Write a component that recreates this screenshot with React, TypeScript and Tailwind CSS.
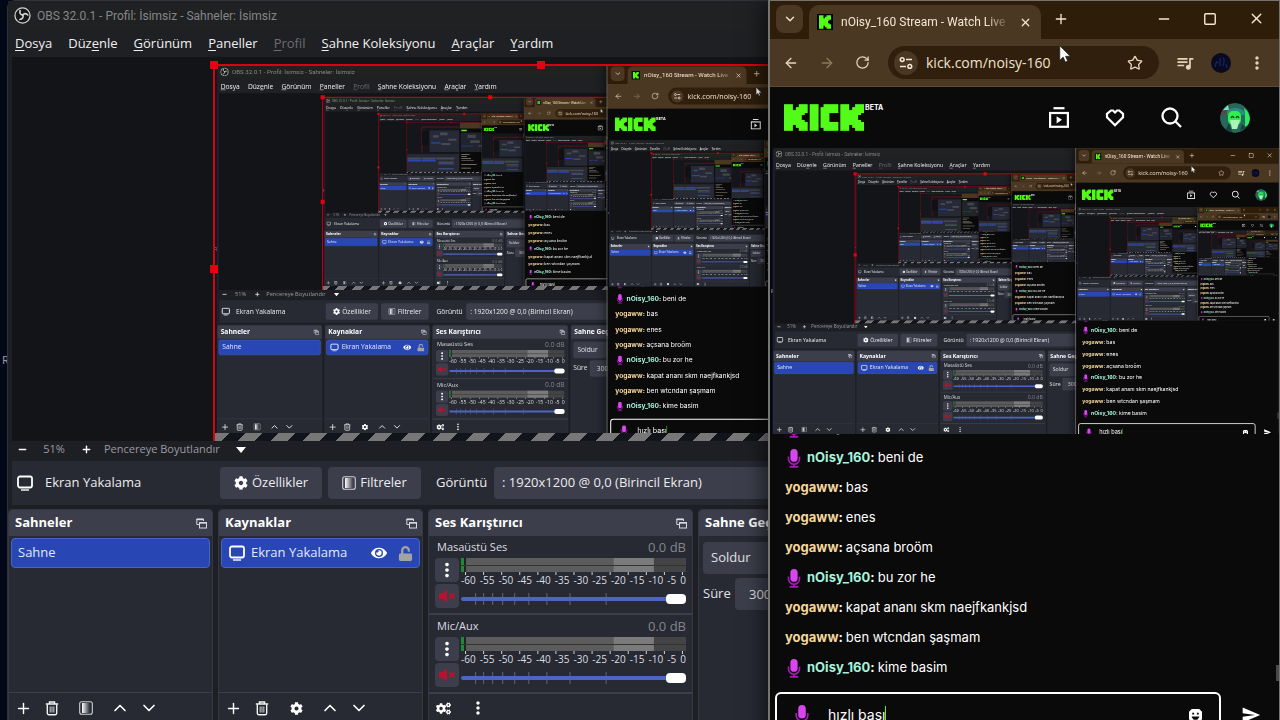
import { useId, useLayoutEffect, useRef, useState } from "react";
import type { ReactNode } from "react";
import {
  ArrowLeft,
  ArrowRight,
  ChevronDown,
  ChevronUp,
  Minus,
  Plus,
  RotateCw,
  Square,
  Star,
  X,
} from "lucide-react";
import { FaCog, FaCogs, FaEye, FaUnlock, FaVolumeMute } from "react-icons/fa";
import { MdMoreVert, MdQueueMusic, MdSend } from "react-icons/md";

const SCREEN_WIDTH = 1280;
const MAX_DEPTH = 3;

const menus = [
  { key: "D", before: "", after: "osya" },
  { key: "e", before: "Düz", after: "nle" },
  { key: "G", before: "", after: "örünüm" },
  { key: "P", before: "", after: "aneller" },
  { key: "P", before: "", after: "rofil", disabled: true },
  { key: "S", before: "", after: "ahne Koleksiyonu" },
  { key: "A", before: "", after: "raçlar" },
  { key: "Y", before: "", after: "ardım" },
];

const messages = [
  { user: "nOisy_160", text: "selam", mod: true },
  { user: "nOisy_160", text: "beni de", mod: true },
  { user: "yogaww", text: "bas" },
  { user: "yogaww", text: "enes" },
  { user: "yogaww", text: "açsana broöm" },
  { user: "nOisy_160", text: "bu zor he", mod: true },
  { user: "yogaww", text: "kapat ananı skm naejfkankjsd" },
  { user: "yogaww", text: "ben wtcndan şaşmam" },
  { user: "nOisy_160", text: "kime basim", mod: true },
];

const levels = [-60, -55, -50, -45, -40, -35, -30, -25, -20, -15, -10, -5, 0];
const faderMarks = [14, 22, 31, 41, 53, 67, 85, 108, 144];

/* ---------- icons ---------- */

const ObsLogo = () => (
  <svg viewBox="0 0 18 18" className="size-[17px]" fill="none">
    <circle cx="9" cy="9" r="8" fill="#17181c" stroke="#d6d6d6" strokeWidth="1.3" />
    <g stroke="#d6d6d6" strokeWidth="1.7" strokeLinecap="round">
      <path d="M9.3 8.6C6.8 8.4 5.7 6.3 6.4 3.8" />
      <path d="M9.3 8.6C10.6 6.5 13 6.5 14.6 8.4" />
      <path d="M9.3 8.6C10.3 11 8.8 13 6.2 13.2" />
    </g>
  </svg>
);

const MonitorIcon = () => (
  <svg viewBox="0 0 18 16" className="h-4 w-[18px] shrink-0" fill="none">
    <rect x="2" y="1.5" width="14" height="11" rx="2" stroke="#fff" strokeWidth="1.8" />
    <path d="M5 15h8" stroke="#fff" strokeWidth="1.4" />
  </svg>
);

const FloatIcon = () => (
  <svg viewBox="0 0 11 11" className="size-[11px]" fill="none" stroke="#d8d9de">
    <path d="M3 6.5H.8V1h6.7v2" />
    <path d="M.5 1.5h7" strokeWidth="1.4" />
    <rect x="3.5" y="4.5" width="7" height="5.5" />
    <path d="M3.5 5h7" strokeWidth="1.4" />
  </svg>
);

const FilterIcon = () => {
  const id = useId();
  return (
    <svg viewBox="0 0 14 14" className="size-[14px]" fill="none">
      <linearGradient id={id}>
        <stop offset="0" stopColor="#fff" />
        <stop offset="1" stopColor="#fff" stopOpacity="0" />
      </linearGradient>
      <rect x=".7" y=".7" width="12.6" height="12.6" rx="2" stroke="#cfd0d6" strokeWidth="1.1" />
      <rect x="3" y="2" width="8" height="10" fill={`url(#${id})`} />
    </svg>
  );
};

const TrashIcon = () => (
  <svg viewBox="0 0 14 15" className="h-[15px] w-[14px]" fill="none" stroke="#f2f2f4">
    <path d="M.8 3h12.4M4.5 2.5V1h5v1.5" strokeWidth="1.5" />
    <path d="M2.3 3.5v8.8c0 .8.6 1.4 1.4 1.4h6.6c.8 0 1.4-.6 1.4-1.4V3.5" strokeWidth="1.4" />
    <path d="M5.2 5.5v6M7 5.5v6M8.8 5.5v6" stroke="#b5b6bc" strokeWidth="1.2" />
  </svg>
);

const MicIcon = ({ className }: { className: string }) => (
  <svg viewBox="0 0 14 20" className={className} fill="none">
    <rect x="3.2" y="0" width="7.6" height="13.5" rx="3.8" fill="#d946ef" />
    <path d="M1.2 8v2.2a5.8 5.8 0 0 0 11.6 0V8" stroke="#a21caf" strokeWidth="1.7" />
    <path d="M7 16v2.6M2.5 18.8h9" stroke="#a21caf" strokeWidth="1.8" />
  </svg>
);

const KickBlockK = ({ x = 0 }: { x?: number }) => (
  <g transform={`translate(${x} 0)`}>
    <rect width="9" height="27" />
    <rect x="8" y="6" width="5" height="15" />
    <rect x="12" y="3" width="6" height="21" />
    <rect x="15" width="9" height="9" />
    <rect x="17" y="8" width="4" height="3" />
    <rect x="17" y="16" width="4" height="3" />
    <rect x="15" y="18" width="9" height="9" />
  </g>
);

const KickLogo = () => (
  <svg viewBox="0 0 81 27" className="h-[27px] w-20" fill="#53fc18" role="img" aria-label="Kick">
    <KickBlockK />
    <rect x="26" width="9" height="27" />
    <rect x="37" y="3" width="9" height="21" />
    <rect x="40" width="15" height="9" />
    <rect x="40" y="18" width="15" height="9" />
    <KickBlockK x={57} />
  </svg>
);

const Pointer = () => (
  <svg viewBox="0 0 12 18" className="absolute top-[45px] left-[82.7%] z-30 h-[18px] w-3">
    <path d="M.8.8v14.4l3.4-3.1 2.2 5 2.3-1-2.2-4.8h4.7z" fill="#fff" stroke="#222" strokeWidth=".7" />
  </svg>
);

/* ---------- screen capture ---------- */

// Far too small to read, so only the coloured blocks are drawn
const Thumbnail = () => (
  <svg viewBox="0 0 128 72" className="size-full">
    <rect width="128" height="72" fill="#15161b" />
    <path d="M22 44V7h86" fill="none" stroke="#8c1018" />
    <path d="M22 13h10v20H22z" fill="#101116" />
    <path d="M33 12h43v31H33z" fill="#272a36" />
    <path d="M38 19h8v3h-8zM48 15h11v4H48zM60 24h12v3H60zM50 30h13v3H50z" fill="#474a59" />
    <path d="M35 29h14v2H35z" fill="#2847b5" />
    <path d="M0 46h76v26H0z" fill="#272a33" />
    <path d="M1 51h20v3H1zM22 51h20v3H22zM43 51h26v3H43zM46 57h22v2H46z" fill="#474a56" />
    <path d="M1 54h20v3H1zM22 54h20v3H22z" fill="#2847b5" />
    <path d="M46 60h22v1H46zM46 67h22v1H46z" fill="#4c65c2" />
    <path d="M77 0h51v72H77z" fill="#0a0a0b" />
    <path d="M77 0h51v9H77z" fill="#4a3823" />
    <path d="M79 11h8v2h-8z" fill="#53fc18" />
    <path d="M78 15h50v28H78z" fill="#22242d" />
    <path d="M88 18h12v5H88zM92 26h14v4H92zM108 21h16v4h-16zM104 33h18v3h-18z" fill="#42454f" />
    <path d="M79 34h8v1h-8zM88 34h8v1h-8z" fill="#2847b5" />
    <path d="M79 46h12v1H79zM79 49h8v1h-8zM79 52h14v1H79zM79 55h18v1H79zM79 61h22v1H79zM79 66h14v1H79z" fill="#8f8a78" />
  </svg>
);

const Capture = ({ depth }: { depth: number }) => {
  const ref = useRef<HTMLDivElement>(null);
  const [scale, setScale] = useState(0.5);

  useLayoutEffect(() => {
    const el = ref.current;
    if (!el) return;
    const update = () => setScale(el.offsetWidth / SCREEN_WIDTH);
    update();
    const observer = new ResizeObserver(update);
    observer.observe(el);
    return () => observer.disconnect();
  }, []);

  return (
    <div ref={ref} className="aspect-video w-full shrink-0 overflow-hidden bg-[#1a1c23]" inert>
      {depth < MAX_DEPTH ? (
        <div className="w-[1280px] origin-top-left" style={{ transform: `scale(${scale})` }}>
          <Desktop depth={depth + 1} />
        </div>
      ) : (
        <Thumbnail />
      )}
    </div>
  );
};

/* ---------- OBS ---------- */

const Dock = ({
  title,
  className,
  toolbar,
  children,
}: {
  title: string;
  className: string;
  toolbar?: ReactNode;
  children: ReactNode;
}) => (
  <section className={`flex flex-col rounded-t border border-[#343744] bg-[#272a33] ${className}`}>
    <header className="flex h-[26px] shrink-0 items-center justify-between rounded-t bg-[#3c3e4b] pr-1 pl-[6px]">
      <h2 className="text-[13px] font-bold whitespace-nowrap text-white">{title}</h2>
      <button aria-label="Ayır" className="p-px">
        <FloatIcon />
      </button>
    </header>
    <div className="min-h-0 flex-1">{children}</div>
    {toolbar && (
      <div className="flex h-[31px] shrink-0 items-center gap-[9px] border-t border-[#3c3e4b] px-1 text-white">
        {toolbar}
      </div>
    )}
  </section>
);

const ToolButton = ({ label, children }: { label: string; children: ReactNode }) => (
  <button aria-label={label} className="flex size-5 items-center justify-center">
    {children}
  </button>
);

const Channel = ({ name }: { name: string }) => {
  const id = useId();
  return (
    <div className="h-[79px] border-b-2 border-[#3c3e4b] px-[6px] pt-px">
      <div className="flex h-[21px] items-center justify-between pl-[2px] text-[#dcdde1]">
        <label htmlFor={id} className="text-[11px]">
          {name}
        </label>
        <span className="text-[13px] text-[#84868e]">0.0 dB</span>
      </div>
      <div className="flex gap-[2px]">
        <div className="flex w-6 shrink-0 flex-col gap-[2px]">
          <button
            aria-label={`${name} seçenekleri`}
            className="flex h-6 items-center justify-center rounded bg-[#3c3e4b] text-white"
          >
            <MdMoreVert size={22} />
          </button>
          <button
            aria-label={`${name} sesini aç`}
            className="flex h-6 items-center justify-center rounded bg-[#3c3e4b] text-[#b8122f]"
          >
            <FaVolumeMute size={16} />
          </button>
        </div>
        <div className="min-w-0 flex-1">
          <svg viewBox="0 0 224 17" preserveAspectRatio="none" className="h-[17px] w-full">
            <rect width="224" height="14" fill="#444446" />
            <rect width="192" height="14" fill="#5c5c5d" />
            <rect x="152" width="40" height="14" fill="#7b7b7b" />
            <rect width="3" height="14" fill="#1f8a35" />
            <rect x="3" width="2" height="14" fill="#222" />
            <rect y="7" width="224" height="1" fill="#333336" />
            {levels.map((level, i) => (
              <rect key={level} x={4 + i * 18} y="14" width="1" height="3" fill="#d0d0d0" />
            ))}
          </svg>
          <div className="flex h-[10px] items-center justify-between text-[10px] leading-[10px] text-[#dcdde1]">
            {levels.map((level) => (
              <span key={level}>{level}</span>
            ))}
          </div>
          <div className="relative flex h-7 items-center">
            <svg viewBox="0 0 224 12" preserveAspectRatio="none" className="absolute h-3 w-full">
              {faderMarks.map((x) => (
                <rect key={x} x={x} width="1" height="12" fill="#62646e" />
              ))}
            </svg>
            <input
              id={id}
              type="range"
              defaultValue={100}
              className="relative h-1 w-full appearance-none rounded-full bg-[#4c65c2] [&::-webkit-slider-thumb]:h-[10px] [&::-webkit-slider-thumb]:w-5 [&::-webkit-slider-thumb]:appearance-none [&::-webkit-slider-thumb]:rounded [&::-webkit-slider-thumb]:bg-white"
            />
          </div>
        </div>
      </div>
    </div>
  );
};

const ObsWindow = ({ depth }: { depth: number }) => {
  const id = useId();
  return (
    <div className="absolute top-0 right-[16%] bottom-12 left-[7px] flex flex-col rounded-tl-lg border border-[#30343a] bg-[#1e1f24] font-['Open_Sans','Noto_Sans',sans-serif]">
      <div className="flex h-[29px] shrink-0 items-center gap-[6px] bg-[#202122] pl-[6px]">
        <ObsLogo />
        <h1 className="font-[Roboto,sans-serif] text-xs text-[#85868a]">
          OBS 32.0.1 - Profil: İsimsiz - Sahneler: İsimsiz
        </h1>
      </div>
      <nav className="flex h-[27px] shrink-0 items-center gap-4 bg-[#1f2023] pl-[7px] text-[13px] text-[#f0f0f2]">
        {menus.map((menu) => (
          <button
            key={menu.key + menu.after}
            disabled={menu.disabled}
            className="whitespace-nowrap disabled:text-[#6c6d71]"
          >
            {menu.before}
            <span className="underline underline-offset-2">{menu.key}</span>
            {menu.after}
          </button>
        ))}
      </nav>

      {/* Preview */}
      <div className="mx-1 flex min-h-0 flex-1 justify-center overflow-hidden bg-[#131418] pt-[7px]">
        <div className="relative flex aspect-[8/5] w-[62%] shrink-0 flex-col self-start">
          <Capture depth={depth} />
          <div className="flex-1 bg-[repeating-linear-gradient(135deg,#777777_0px,#777777_12px,#12141c_12px,#12141c_23px)]" />
          <div className="absolute inset-0 border-2 border-[#d90010]">
            <span className="absolute -top-[5px] -left-[5px] size-2 bg-[#e60010]" />
            <span className="absolute -top-[5px] left-1/2 size-2 -translate-x-1/2 bg-[#e60010]" />
            <span className="absolute top-1/2 -left-[5px] size-2 -translate-y-1/2 bg-[#e60010]" />
          </div>
        </div>
      </div>
      <div className="mx-1 flex h-5 shrink-0 items-center pb-[3px] text-[11px] text-[#9a9ba0]">
        <button aria-label="Uzaklaştır" className="flex w-5 justify-center text-white">
          <Minus size={11} strokeWidth={3} />
        </button>
        <span className="w-11 text-center">51%</span>
        <button aria-label="Yakınlaştır" className="flex w-5 justify-center text-white">
          <Plus size={11} strokeWidth={3} />
        </button>
        <button className="flex items-center gap-4 pl-2">
          Pencereye Boyutlandır
          <svg viewBox="0 0 10 6" className="h-[6px] w-[10px]" fill="#fff">
            <path d="M0 0h10L5 6z" />
          </svg>
        </button>
      </div>

      {/* Context bar */}
      <div className="mx-1 mb-1 flex h-11 shrink-0 items-center bg-[#272a33] px-1 text-[13px] text-[#ececef]">
        <div className="flex w-[204px] shrink-0 items-center gap-[11px]">
          <MonitorIcon />
          Ekran Yakalama
        </div>
        <button className="flex h-8 w-[102px] shrink-0 items-center justify-center gap-1 rounded bg-[#3c3e4b]">
          <FaCog size={14} color="#fff" />
          Özellikler
        </button>
        <button className="ml-[6px] flex h-8 w-[93px] shrink-0 items-center justify-center gap-1 rounded bg-[#3c3e4b]">
          <FilterIcon />
          Filtreler
        </button>
        <label htmlFor={`${id}-display`} className="ml-[15px] w-[58px] shrink-0">
          Görüntü
        </label>
        <select
          id={`${id}-display`}
          className="h-8 min-w-0 flex-1 appearance-none rounded bg-[#3c3e4b] px-2"
        >
          <option>: 1920x1200 @ 0,0 (Birincil Ekran)</option>
        </select>
      </div>

      {/* Docks */}
      <div className="mb-[27px] flex h-[215px] shrink-0 gap-[5px]">
        <Dock
          title="Sahneler"
          className="w-[205px]"
          toolbar={
            <>
              <ToolButton label="Sahne ekle"><Plus size={17} /></ToolButton>
              <ToolButton label="Sahneyi sil"><TrashIcon /></ToolButton>
              <div className="mx-[5px] flex">
                <ToolButton label="Sahne filtreleri"><FilterIcon /></ToolButton>
              </div>
              <ToolButton label="Yukarı taşı"><ChevronUp size={20} /></ToolButton>
              <ToolButton label="Aşağı taşı"><ChevronDown size={20} /></ToolButton>
            </>
          }
        >
          <ul className="p-[2px]">
            <li className="flex h-[30px] items-center rounded border border-[#4563c9] bg-[#2847b5] px-[6px] text-[13px] text-[#e4e8f8]">
              Sahne
            </li>
          </ul>
        </Dock>
        <Dock
          title="Kaynaklar"
          className="w-[205px]"
          toolbar={
            <>
              <ToolButton label="Kaynak ekle"><Plus size={17} /></ToolButton>
              <ToolButton label="Kaynağı sil"><TrashIcon /></ToolButton>
              <div className="mx-[5px] flex">
                <ToolButton label="Kaynak ayarları"><FaCog size={13} /></ToolButton>
              </div>
              <ToolButton label="Yukarı taşı"><ChevronUp size={20} /></ToolButton>
              <ToolButton label="Aşağı taşı"><ChevronDown size={20} /></ToolButton>
            </>
          }
        >
          <ul className="p-[2px]">
            <li className="flex h-[30px] items-center gap-[5px] rounded border border-[#4563c9] bg-[#2847b5] px-[6px] text-[13px] text-[#e4e8f8]">
              <MonitorIcon />
              <span className="flex-1 whitespace-nowrap">Ekran Yakalama</span>
              <button aria-label="Gizle" className="mr-[6px]">
                <FaEye size={16} color="#fff" />
              </button>
              <button aria-label="Kilitle">
                <FaUnlock size={15} color="#a3a3a3" />
              </button>
            </li>
          </ul>
        </Dock>
        <Dock
          title="Ses Karıştırıcı"
          className="w-[265px]"
          toolbar={
            <>
              <ToolButton label="Gelişmiş ses özellikleri"><FaCogs size={15} /></ToolButton>
              <div className="ml-[6px]">
                <ToolButton label="Mikser menüsü"><MdMoreVert size={20} /></ToolButton>
              </div>
            </>
          }
        >
          <Channel name="Masaüstü Ses" />
          <Channel name="Mic/Aux" />
        </Dock>
        <Dock title="Sahne Geçişleri" className="flex-1">
          <div className="flex flex-col gap-1 px-1 py-[6px] text-[13px] text-[#e0e1e5]">
            <select aria-label="Geçiş" className="h-8 appearance-none rounded bg-[#3c3e4b] px-2">
              <option>Soldur</option>
            </select>
            <div className="flex items-center">
              <label htmlFor={`${id}-duration`} className="w-8 shrink-0">
                Süre
              </label>
              <input
                id={`${id}-duration`}
                defaultValue="300 ms"
                className="h-8 min-w-0 flex-1 rounded bg-[#3c3e4b] px-[14px]"
              />
            </div>
          </div>
        </Dock>
      </div>
    </div>
  );
};

/* ---------- browser ---------- */

const ChromeBars = () => (
  <>
    <div className="flex h-[38px] shrink-0 items-end bg-[#2d1d09] pl-[6px] text-[#f3e6d3]">
      <button
        aria-label="Sekmelerde ara"
        className="mb-[6px] flex h-7 w-[27px] items-center justify-center rounded-lg bg-[#4a3823]"
      >
        <ChevronDown size={14} strokeWidth={2.4} />
      </button>
      <div className="ml-[6px] flex h-[34px] w-[232px] items-center rounded-t-[10px] bg-[#4a3823] pr-[9px] pl-2">
        <span className="mr-2 flex size-4 shrink-0 items-center justify-center bg-black">
          <svg viewBox="0 0 24 27" className="h-[14px] w-3" fill="#53fc18">
            <KickBlockK />
          </svg>
        </span>
        <span className="min-w-0 flex-1 overflow-hidden font-[Roboto,sans-serif] text-xs whitespace-nowrap [mask-image:linear-gradient(to_right,black_85%,transparent)]">
          nOisy_160 Stream - Watch Live
        </span>
        <button aria-label="Sekmeyi kapat" className="ml-2">
          <X size={13} strokeWidth={2.4} />
        </button>
      </div>
      <button aria-label="Yeni sekme" className="mb-3 ml-3">
        <Plus size={16} />
      </button>
      <div className="mb-3 ml-auto flex items-center gap-[31px] pr-[14px]">
        <button aria-label="Simge durumuna küçült"><Minus size={16} /></button>
        <button aria-label="Ekranı kapla"><Square size={14} strokeWidth={2.4} /></button>
        <button aria-label="Kapat"><X size={17} /></button>
      </div>
    </div>
    <div className="flex h-12 shrink-0 items-center border-b border-[#5d4a35] bg-[#4a3823] pr-3 pl-[13px] text-[#e6d3ba]">
      <button aria-label="Geri" className="mr-5"><ArrowLeft size={16} /></button>
      <button aria-label="İleri" className="mr-5 text-[#8d7759]"><ArrowRight size={16} /></button>
      <button aria-label="Yenile" className="mr-[18px]"><RotateCw size={15} /></button>
      <div className="flex h-[33px] min-w-0 flex-1 items-center rounded-full bg-[#2f1f0c] pr-4 pl-[6px]">
        <span className="mr-2 flex size-6 shrink-0 items-center justify-center rounded-full bg-[#4a3823]">
          <svg viewBox="0 0 14 14" className="size-[14px]" fill="none" stroke="#f3e6d3" strokeWidth="1.5">
            <circle cx="3.2" cy="3.6" r="1.9" />
            <path d="M7 3.6h6M1 10.4h6" />
            <circle cx="10.8" cy="10.4" r="1.9" />
          </svg>
        </span>
        <input
          aria-label="Adres çubuğu"
          defaultValue="kick.com/noisy-160"
          className="min-w-0 flex-1 bg-transparent text-sm text-[#f1e3cf] outline-none"
        />
        <button aria-label="Yer işareti ekle"><Star size={16} /></button>
      </div>
      <button aria-label="Medya" className="ml-4"><MdQueueMusic size={20} /></button>
      <button aria-label="Profil" className="mx-4">
        <svg viewBox="0 0 20 20" className="size-5">
          <circle cx="10" cy="10" r="10" fill="#080b20" />
          <path d="M4 14c1-5 2-7 3-4M9 5v8M12 5c2 1 1 5 0 8M15 11l1 4" fill="none" stroke="#16266b" strokeWidth="1.2" />
        </svg>
      </button>
      <button aria-label="Menü"><MdMoreVert size={20} /></button>
    </div>
  </>
);

const KickPage = ({ depth }: { depth: number }) => (
  <div className="relative flex min-h-0 flex-1 flex-col bg-[#0a0a0b] font-['Inter',sans-serif] text-white">
    <header className="flex h-[61px] shrink-0 items-center pr-[29px] pl-[14px]">
      <a href="#" className="flex items-start gap-px">
        <KickLogo />
        <span className="text-[7px] leading-[7px] font-bold">BETA</span>
      </a>
      <nav className="ml-auto flex items-center gap-9">
        <a href="#" aria-label="Takip edilenler">
          <svg viewBox="0 0 20 21" className="h-[21px] w-5" fill="none">
            <path d="M4.5 1.2h11" stroke="#fff" strokeWidth="2.2" />
            <rect x="1.1" y="6" width="17.8" height="13.8" stroke="#fff" strokeWidth="2.2" />
            <path d="M7.6 9.2v7.2l5.4-3.6z" fill="#fff" />
          </svg>
        </a>
        <a href="#" aria-label="Favoriler">
          <svg viewBox="0 0 20 18" className="h-[18px] w-5" fill="none">
            <path d="M6 1.5h2l2 2 2-2h2.2L18 4.8v3.4l-8 8-8-8V4.8z" stroke="#fff" strokeWidth="2.2" />
          </svg>
        </a>
        <button aria-label="Ara">
          <svg viewBox="0 0 21 21" className="size-[21px]" fill="none" stroke="#fff" strokeWidth="2.3">
            <circle cx="9" cy="9" r="7.5" />
            <path d="m14.5 14.5 5.5 5.5" />
          </svg>
        </button>
        <button aria-label="Hesap" className="ml-[2px]">
          <svg viewBox="0 0 30 30" className="size-[30px] rounded-full">
            <circle cx="15" cy="15" r="15" fill="#27675c" />
            <path d="M0 13Q4 2 11 1l-3 9z" fill="#5a4a3a" />
            <path d="M3 7l5-5 1 5z" fill="#5eead4" />
            <path d="M24 5q6 5 6 12-2 7-5 6V11z" fill="#2bee5e" />
            <path d="M7 12Q6 5 15 5t10 7z" fill="#2c8d84" />
            <rect x="8" y="8" width="13" height="14" rx="5" fill="#2ef04d" />
            <path d="M10 17h10l-3 9h-5z" fill="#a8f5b5" />
            <path d="M11 15q1.500-3 3 0m2 0q1.500-3 3 0" fill="none" stroke="#0b4020" strokeWidth="1.400" />
            <path d="M5 28l4-8 3 9zM20 28l2-7 4 4z" fill="#16433f" />
          </svg>
        </button>
      </nav>
    </header>
    <Capture depth={depth} />
    <div className="flex min-h-0 flex-1 flex-col justify-end overflow-hidden pl-[15px]">
      {messages.map((message) => (
        <p
          key={message.text}
          className="flex h-[30px] shrink-0 items-center text-[13px] whitespace-pre"
        >
          {message.mod && <MicIcon className="mr-[6px] ml-[2px] h-[19px] w-[14px]" />}
          <span className={message.mod ? "font-bold text-[#a5f3dc]" : "font-bold text-[#f6d79c]"}>
            {message.user}
          </span>
          <span className="font-bold">: </span>
          {message.text}
        </p>
      ))}
    </div>
    <div className="flex shrink-0 items-center gap-5 pt-[9px] pr-[18px] pb-[14px] pl-[5px]">
      <label className="flex h-[46px] flex-1 items-center rounded-md border-2 border-white pr-[17px] pl-[17px]">
        <MicIcon className="mr-[18px] h-5 w-4" />
        <input
          aria-label="Mesaj"
          defaultValue="hızlı bası"
          className="bg-transparent text-sm outline-none [field-sizing:content]"
        />
        <span className="h-[19px] w-px bg-[#53fc18]" />
        <svg viewBox="0 0 14 14" className="ml-auto size-[13px]">
          <path d="M3 0h8l3 3v8l-3 3H3l-3-3V3z" fill="#fff" />
          <path d="M3.500 4h2v2h-2zM8.500 4h2v2h-2zM3 8h8v1l-2 2.500H5L3 9z" fill="#0a0a0b" />
        </svg>
      </label>
      <button aria-label="Gönder"><MdSend size={20} /></button>
    </div>
    <div className="absolute right-0 bottom-[71px] h-4 w-[3px] bg-[#4a4a4c]" />
  </div>
);

const BrowserWindow = ({ depth }: { depth: number }) => (
  <div className="absolute top-0 right-0 bottom-12 z-10 flex w-[40%] flex-col border-t border-r border-l-2 border-[#77736f] font-['Open_Sans','Noto_Sans',sans-serif] shadow-[-4px_0_20px_rgba(0,0,0,0.6)]">
    <ChromeBars />
    <KickPage depth={depth} />
  </div>
);

const Desktop = ({ depth }: { depth: number }) => (
  <div className="relative aspect-[8/5] w-full overflow-hidden bg-[#030818]">
    <span className="absolute top-[352px] left-[2px] text-[11px] leading-4 text-[#9a9ca5]">R</span>
    <ObsWindow depth={depth} />
    <BrowserWindow depth={depth} />
    <Pointer />
  </div>
);

export default function App() {
  return (
    <main className="h-screen w-full overflow-hidden bg-[#030818]">
      <Desktop depth={0} />
    </main>
  );
}
